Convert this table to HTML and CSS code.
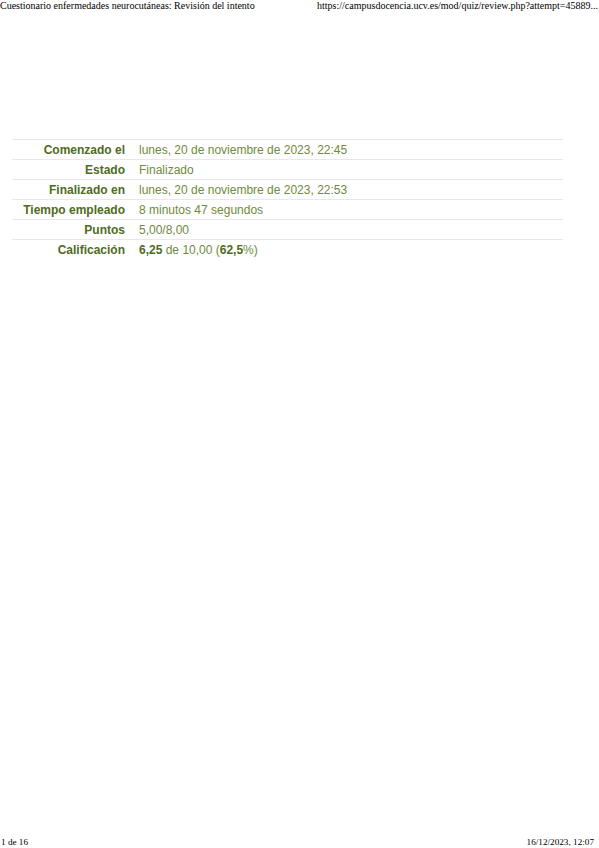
FILE: index.html
```html
<!DOCTYPE html>
<html lang="es">
<head>
<meta charset="utf-8">
<title>Revisión del intento</title>
<link rel="stylesheet" href="styles.css">
</head>
<body>
<div class="page">
  <header class="print-head">
    <span>Cuestionario enfermedades neurocutáneas: Revisión del intento</span>
    <span>https://campusdocencia.ucv.es/mod/quiz/review.php?attempt=45889...</span>
  </header>
  <main class="content">
    <table class="summary">
      <tbody>
        <tr><th>Comenzado el</th><td>lunes, 20 de noviembre de 2023, 22:45</td></tr>
        <tr><th>Estado</th><td>Finalizado</td></tr>
        <tr><th>Finalizado en</th><td>lunes, 20 de noviembre de 2023, 22:53</td></tr>
        <tr><th>Tiempo empleado</th><td>8 minutos 47 segundos</td></tr>
        <tr><th>Puntos</th><td>5,00/8,00</td></tr>
        <tr><th>Calificación</th><td><b>6,25</b> de 10,00 (<b>62,5</b>%)</td></tr>
      </tbody>
    </table>
  </main>
  <footer class="print-foot">
    <span>1 de 16</span>
    <span>16/12/2023, 12:07</span>
  </footer>
</div>
</body>
</html>
```
FILE: styles.css
```css
html, body {
  margin: 0;
  padding: 0;
  background: #fff;
}
.page {
  width: 599px;
  height: 848px;
  display: flex;
  flex-direction: column;
}
.print-head, .print-foot {
  display: flex;
  justify-content: space-between;
  font-family: "Liberation Serif", serif;
  color: #000;
  height: 12px;
  line-height: 12px;
  white-space: nowrap;
  overflow: hidden;
}
.print-head {
  font-size: 10px;
  padding: 0 1px 0 0;
}
.print-foot {
  margin-top: auto;
  font-size: 9.2px;
  padding: 0 5px 0 1px;
}
.content {
  padding: 127px 36px 0 12px;
}
.summary {
  width: 100%;
  border-collapse: collapse;
  font-family: "Liberation Sans", Arial, sans-serif;
  font-size: 12px;
}
.summary tr {
  border-top: 1px solid #e8e8e8;
}
.summary th, .summary td {
  height: 19.2px;
  padding: 1px 0 0 0;
  line-height: 18px;
  vertical-align: middle;
  box-sizing: border-box;
}
.summary th {
  width: 127px;
  text-align: right;
  font-weight: bold;
  color: #4e6b22;
  padding-right: 14px;
  white-space: nowrap;
}
.summary td {
  color: #6e8a3c;
  text-align: left;
}
.summary td b { color: #4e6b22; }
```
